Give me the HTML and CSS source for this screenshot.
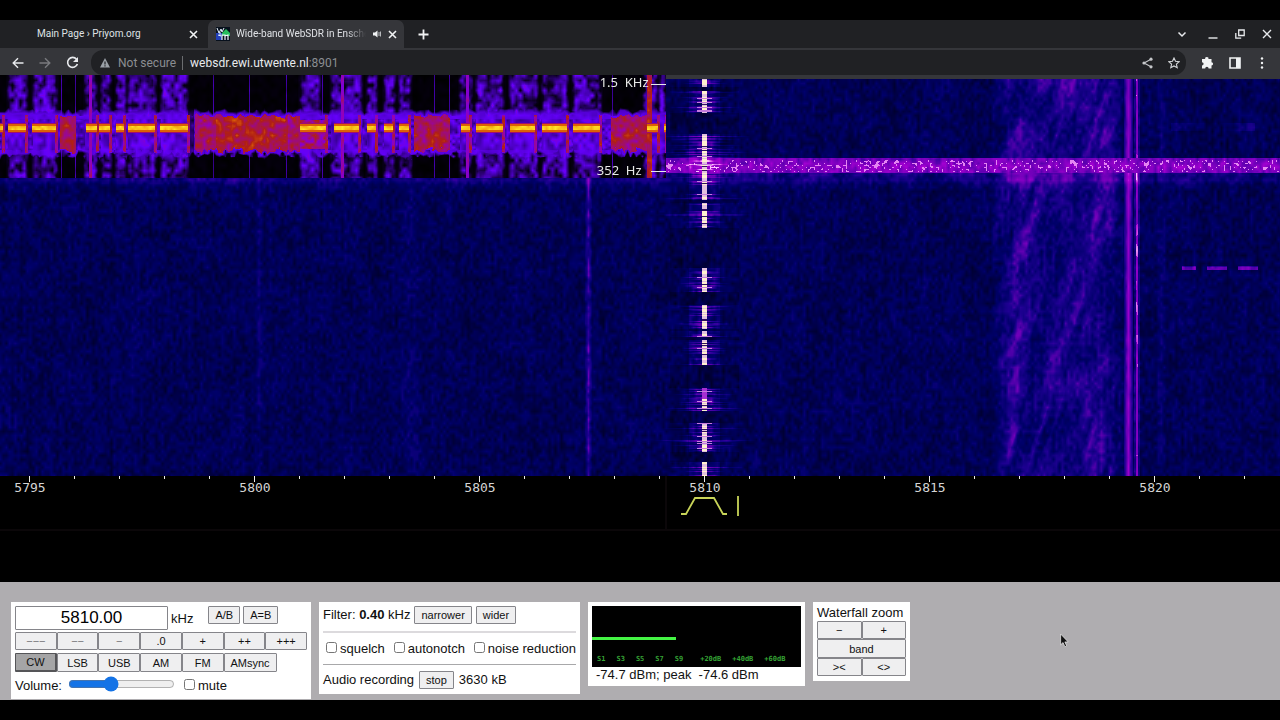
FILE: index.html
```html
<!DOCTYPE html>
<html lang="en">
<head>
<meta charset="utf-8">
<title>Wide-band WebSDR in Enschede</title>
<link rel="stylesheet" href="styles.css">
</head>
<body>
<header class="browser">
  <div class="tabs">
    <div class="tab">
      <span class="favicon"></span>
      <span class="tab-title">Main Page › Priyom.org</span>
      <button class="icon-btn" aria-label="Close tab"><svg width="9" height="9" viewBox="0 0 9 9"><path d="M1 1l7 7M8 1l-7 7" stroke="#f1f3f4" stroke-width="1.6"/></svg></button>
    </div>
    <div class="tab tab-active">
      <svg class="favicon" width="14" height="14" viewBox="0 0 14 14"><rect width="14" height="14" fill="#07101c"/><path d="M0 6h6v7H0z" fill="#2340b8"/><path d="M1 1l2 5 2-4 1 3 2-4M4 5v4M2 8l3 1" stroke="#e8f4ff" fill="none"/><path d="M6 6l4-4 4 4v3H6z" fill="#27bd5d"/><path d="M6 13V8h3v5M9 9l3-1v5" stroke="#f3f7ff" stroke-width="1.2" fill="none"/></svg>
      <span class="tab-title tab-fade">Wide-band WebSDR in Enschede</span>
      <svg width="10" height="10" viewBox="0 0 10 10"><path d="M1 3.500h2L5.500 1.500v7L3 6.500H1z" fill="#f1f3f4"/><path d="M7 3v4M8.500 2.500v5" stroke="#b8babd" fill="none"/></svg>
      <button class="icon-btn" aria-label="Close tab"><svg width="9" height="9" viewBox="0 0 9 9"><path d="M1 1l7 7M8 1l-7 7" stroke="#f1f3f4" stroke-width="1.6"/></svg></button>
    </div>
    <button class="icon-btn new-tab" aria-label="New tab"><svg width="11" height="11" viewBox="0 0 11 11"><path d="M5.500 0.500v10M.5 5.500h10" stroke="#f1f3f4" stroke-width="1.8"/></svg></button>
    <div class="window-buttons">
      <button class="icon-btn" aria-label="Search tabs"><svg width="10" height="10" viewBox="0 0 10 10"><path d="M1.500 3.500L5 7l3.500-3.500" stroke="#e8eaed" stroke-width="1.5" fill="none"/></svg></button>
      <button class="icon-btn" aria-label="Minimize"><svg width="10" height="10" viewBox="0 0 10 10"><path d="M.5 9h9" stroke="#e8eaed" stroke-width="1.4"/></svg></button>
      <button class="icon-btn" aria-label="Restore"><svg width="10" height="10" viewBox="0 0 10 10"><path d="M3.700 1h5.500v5.500H3.700zM.8 4v5.200h5.400" stroke="#e8eaed" stroke-width="1.300" fill="none"/></svg></button>
      <button class="icon-btn" aria-label="Close window"><svg width="10" height="10" viewBox="0 0 10 10"><path d="M1 1l8 8M9 1l-8 8" stroke="#e8eaed" stroke-width="1.4"/></svg></button>
    </div>
  </div>
  <div class="toolbar">
    <div class="nav-buttons">
      <button class="icon-btn" aria-label="Back"><svg width="12" height="12" viewBox="0 0 12 12"><path d="M11.500 6H1.500M6 1.200L1.200 6 6 10.800" stroke="#e8eaed" stroke-width="1.400" fill="none"/></svg></button>
      <button class="icon-btn" aria-label="Forward"><svg width="12" height="12" viewBox="0 0 12 12"><path d="M.5 6h10M6 1.200L10.800 6 6 10.800" stroke="#797a7e" stroke-width="1.400" fill="none"/></svg></button>
      <button class="icon-btn" aria-label="Reload"><svg width="13" height="13" viewBox="0 0 13 13"><path d="M10.500 3.200A5 5 0 1 0 11.400 8" stroke="#e8eaed" stroke-width="1.600" fill="none"/><path d="M12 1v5H7z" fill="#e8eaed"/></svg></button>
    </div>
    <div class="address">
      <svg width="10" height="10" viewBox="0 0 10 10"><path d="M5 0l5 9.500H0z" fill="#9aa0a6"/><path d="M5 3.500v3M5 7.300v1.200" stroke="#202124" stroke-width="1.200"/></svg>
      <span class="not-secure">Not secure</span>
      <span class="url"><span class="host">websdr.ewi.utwente.nl</span>:8901</span>
      <span class="address-actions">
        <button class="icon-btn" aria-label="Share"><svg width="11" height="12" viewBox="0 0 11 12"><path d="M9 2.200L2 6l7 3.800" stroke="#c5c7ca" stroke-width="1.100" fill="none"/><circle cx="9" cy="2.200" r="1.600" fill="#c5c7ca"/><circle cx="2" cy="6" r="1.600" fill="#c5c7ca"/><circle cx="9" cy="9.800" r="1.600" fill="#c5c7ca"/></svg></button>
        <button class="icon-btn" aria-label="Bookmark"><svg width="12" height="12" viewBox="0 0 12 12"><path d="M6 1l1.500 3.300 3.600.4-2.700 2.400.8 3.600L6 8.900l-3.200 1.800.8-3.600L.9 4.700l3.600-.4z" stroke="#d4d6d9" stroke-width="1.100" fill="none"/></svg></button>
      </span>
    </div>
    <div class="ext-buttons">
      <button class="icon-btn" aria-label="Extensions"><svg width="13" height="13" viewBox="0 0 13 13"><path d="M1 3h3.200a1.700 1.700 0 1 1 3.300 0H10.500v3.200a1.600 1.600 0 1 1 0 3.200V12.500H7.600a1.700 1.700 0 0 0-3.400 0H1V9.400a1.600 1.600 0 0 0 0-3.200z" fill="#f1f3f4"/></svg></button>
      <button class="icon-btn" aria-label="Side panel"><svg width="12" height="12" viewBox="0 0 12 12"><path d="M1 1h10v10H1z" stroke="#f1f3f4" stroke-width="1.600" fill="none"/><path d="M7 1h4v10H7z" fill="#f1f3f4"/></svg></button>
      <button class="icon-btn menu-btn" aria-label="Menu"><svg width="4" height="12" viewBox="0 0 4 12"><g fill="#f1f3f4"><circle cx="2" cy="1.500" r="1.200"/><circle cx="2" cy="6" r="1.200"/><circle cx="2" cy="10.500" r="1.200"/></g></svg></button>
    </div>
  </div>
</header>

<main class="sdr">
  <section class="waterfall">
    <canvas id="waterfall" class="waterfall-canvas" width="1280" height="397"></canvas>
    <svg class="scale" id="scale" viewBox="0 0 1280 60"></svg>
    <div class="audio-view">
      <canvas id="audio" class="audio-canvas" width="666" height="103"></canvas>
      <span class="marker marker-top">1.5&nbsp; KHz</span>
      <span class="marker marker-low">352&nbsp; Hz</span>
    </div>
  </section>

  <section class="controls">
    <form class="panel panel-tune">
      <div class="row freq-row">
        <input class="freq" id="freq" type="text" value="5810.00">
        <label class="unit" for="freq">kHz</label>
        <button type="button" class="btn">A/B</button>
        <button type="button" class="btn">A=B</button>
      </div>
      <div class="grid7">
        <button type="button" class="btn dim">−−−</button><button type="button" class="btn dim">−−</button><button type="button" class="btn dim">−</button><button type="button" class="btn">.0</button><button type="button" class="btn">+</button><button type="button" class="btn">++</button><button type="button" class="btn">+++</button>
      </div>
      <div class="grid7 modes">
        <button type="button" class="btn pressed">CW</button><button type="button" class="btn">LSB</button><button type="button" class="btn">USB</button><button type="button" class="btn">AM</button><button type="button" class="btn">FM</button><button type="button" class="btn amsync">AMsync</button>
      </div>
      <div class="row volume-row">
        <label for="vol">Volume:</label>
        <input class="slider" id="vol" type="range" min="0" max="100" value="39">
        <input class="check" id="mute" type="checkbox"><label for="mute">mute</label>
      </div>
    </form>

    <form class="panel panel-filter">
      <div class="row filter-row"><span>Filter: <b>0.40</b> kHz</span><button type="button" class="btn">narrower</button><button type="button" class="btn">wider</button></div>
      <div class="row checks">
        <span class="option"><input class="check" id="sq" type="checkbox"><label for="sq">squelch</label></span>
        <span class="option"><input class="check" id="an" type="checkbox"><label for="an">autonotch</label></span>
        <span class="option"><input class="check" id="nr" type="checkbox"><label for="nr">noise reduction</label></span>
      </div>
      <div class="row record-row"><span>Audio recording</span><button type="button" class="btn">stop</button><span>3630 kB</span></div>
    </form>

    <div class="panel panel-meter">
      <div class="meter">
        <div class="meter-bar"></div>
        <div class="meter-scale"><span>S1</span><span>S3</span><span>S5</span><span>S7</span><span>S9</span><span class="db">+20dB</span><span>+40dB</span><span>+60dB</span></div>
      </div>
      <div class="reading">-74.7 dBm; peak&nbsp; -74.6 dBm</div>
    </div>

    <form class="panel panel-zoom">
      <div>Waterfall zoom</div>
      <div class="zoom-grid">
        <button type="button" class="btn">−</button><button type="button" class="btn">+</button>
        <button type="button" class="btn band">band</button>
        <button type="button" class="btn">&gt;&lt;</button><button type="button" class="btn">&lt;&gt;</button>
      </div>
    </form>
    <svg class="cursor" width="9" height="15" viewBox="0 0 10 16"><path d="M.7.8v12l2.700-2.500 2 4.600 2-.9-2-4.400h3.700z" fill="#111" stroke="#eee" stroke-width=".8"/></svg>
  </section>
</main>
<script src="waterfall.js"></script>
</body>
</html>
```

FILE: styles.css
```css
* { box-sizing: border-box; }
body {
  margin: 0;
  padding: 20px 0;
  background: #000;
  font-family: "Liberation Sans", Arial, sans-serif;
  font-size: 13px;
  line-height: 16px;
  color: #111;
}
svg { display: block; flex: none; }
button, input { font-family: inherit; margin: 0; }
.icon-btn {
  display: flex;
  align-items: center;
  justify-content: center;
  padding: 0;
  border: 0;
  background: none;
}

/* browser frame */
.browser { font-family: Roboto, sans-serif; color: #dfe1e5; }
.tabs {
  display: flex;
  align-items: stretch;
  height: 28px;
  background: #202124;
}
.tab {
  display: flex;
  align-items: center;
  width: 208px;
  padding: 0 10px 0 16px;
  font-size: 10px;
}
.tab-active {
  width: 196px;
  gap: 6px;
  padding: 0 7px 0 8px;
  background: #35363a;
  border-radius: 7px 7px 0 0;
}
.favicon { width: 14px; margin-right: 7px; }
.tab-active .favicon { margin-right: 0; }
.tab-title { flex: 1; overflow: hidden; white-space: nowrap; }
.tab-fade {
  -webkit-mask-image: linear-gradient(90deg, #000 85%, transparent);
  mask-image: linear-gradient(90deg, #000 85%, transparent);
}
.new-tab { margin-left: 14px; }
.window-buttons {
  display: flex;
  gap: 17px;
  margin-left: auto;
  padding-right: 8px;
}
.window-buttons .icon-btn:first-child { margin-right: 4px; }
.toolbar {
  display: flex;
  align-items: flex-start;
  height: 31px;
  padding: 2px 16px 0 12px;
  background: #35363a;
}
.nav-buttons, .ext-buttons { display: flex; gap: 15px; height: 25px; }
.ext-buttons { margin-left: 15px; }
.menu-btn { margin-left: 4px; }
.address {
  display: flex;
  flex: 1;
  align-items: center;
  height: 25px;
  margin-left: 12px;
  padding: 0 6px 0 9px;
  border-radius: 12px;
  background: #202124;
  font-size: 12px;
  color: #8b8e92;
}
.not-secure { margin-left: 8px; padding-right: 6px; border-right: 1px solid #6b6d70; line-height: 14px; }
.url { margin-left: 7px; }
.host { color: #e8eaed; }
.address-actions { display: flex; gap: 15px; margin-left: auto; }

/* waterfall */
.waterfall { position: relative; min-height: 503px; background: #000; }
.waterfall-canvas { display: block; width: 100%; }
.scale { width: 100%; }
.scale-text { font: 13px "DejaVu Sans Mono", monospace; fill: #d4d4d4; text-anchor: middle; }
.audio-view { position: absolute; top: -4px; left: 0; width: 52%; }
.audio-canvas { display: block; width: 100%; }
.marker {
  position: absolute;
  right: 17px;
  font: 13px/16px "Noto Sans", sans-serif;
  color: #e8e8e8;
}
.marker-top { top: -1px; }
.marker-low { bottom: 0; right: 24px; }

/* control panels */
.controls {
  position: relative;
  display: flex;
  align-items: flex-start;
  gap: 8px;
  min-height: 118px;
  padding: 20px 11px 0;
  background: #afadb0;
}
.panel { padding: 4px; background: #fff; }
.row { display: flex; align-items: center; }
.btn {
  height: 18px;
  padding: 0 6px;
  border: 1px solid #85858a;
  border-radius: 1px;
  background: #efeff0;
  color: #111;
  font-size: 11px;
  line-height: 14px;
}
.panel-tune { width: 300px; height: 97px; }
.freq-row { align-items: flex-start; gap: 3px; }
.freq {
  width: 153px;
  height: 24px;
  padding: 0;
  border: 1px solid #85858a;
  border-radius: 1px;
  font-size: 17px;
  text-align: center;
}
.unit { margin-right: 12px; padding-top: 5px; }
.grid7 { display: grid; grid-template-columns: repeat(7, minmax(0, 1fr)); margin-top: 2px; }
.grid7 .btn { padding: 0; }
.modes { margin-top: 3px; }
.modes .btn { height: 19px; }
.dim { color: #77777a; }
.btn.pressed { border: 1px solid #555558; border-width: 1px 2px 2px 1px; background: #a5a5a6; }
.amsync { width: 53px; }
.volume-row { height: 20px; margin-top: 4px; }
.slider { width: 107px; height: 14px; margin: 0 9px 4px 6px; accent-color: #1473e6; }
.check { width: 11px; height: 11px; margin: 0 3px 3px 0; }

.panel-filter { width: 261px; height: 92px; }
.filter-row { gap: 4px; height: 18px; }
.checks {
  justify-content: space-between;
  height: 34px;
  margin-top: 7px;
  padding-left: 3px;
  border-top: 2px solid #dcdadd;
  border-bottom: 1px solid #a8a8aa;
  white-space: nowrap;
}
.option { display: flex; align-items: center; }
.record-row { gap: 5px; margin-top: 6px; }

.panel-meter { width: 217px; height: 84px; }
.meter { display: flex; flex-direction: column; height: 61px; padding-top: 31px; background: #000; }
.meter-bar { width: 40%; height: 3px; background: #45f545; }
.meter-scale {
  display: flex;
  gap: 11px;
  margin: auto 0 3px 5px;
  font: bold 7px/10px "DejaVu Sans Mono", monospace;
  color: #35a335;
}
.meter-scale .db { margin-left: 6px; }
.reading { padding-left: 4px; }

.panel-zoom { width: 97px; height: 79px; padding: 3px 4px 4px; white-space: nowrap; }
.zoom-grid { display: grid; grid-template-columns: 1fr 1fr; }
.band { grid-column: 1 / 3; height: 19px; }
.cursor { position: absolute; top: 51px; left: 1060px; }
```

FILE: waterfall.js
```js
let seed = 12345;
function rnd() {
  seed = (seed * 1664525 + 1013904223) >>> 0;
  return seed / 4294967296;
}
// Smooth value noise over a lattice with the given cell size.
function field(w, h, cx, cy) {
  const gw = Math.ceil(w / cx) + 2, gh = Math.ceil(h / cy) + 2;
  const g = Array.from({ length: gw * gh }, rnd);
  return (x, y) => {
    x = Math.max(0, Math.min(x, w)) / cx;
    y = Math.max(0, Math.min(y, h)) / cy;
    const i = Math.floor(x), j = Math.floor(y), a = x - i, b = y - j, k = j * gw + i;
    return (g[k] * (1 - a) + g[k + 1] * a) * (1 - b) + (g[k + gw] * (1 - a) + g[k + gw + 1] * a) * b;
  };
}
function shade(stops, v) {
  v = Math.max(0, Math.min(1, v));
  for (let i = 1; i < stops.length; i++) {
    const p = stops[i - 1], q = stops[i];
    if (v <= q[0]) {
      const t = (v - p[0]) / (q[0] - p[0]);
      return [1, 2, 3].map(c => p[c] + (q[c] - p[c]) * t);
    }
  }
  return stops[stops.length - 1].slice(1);
}
function paint(id, stops, level) {
  const c = document.getElementById(id), w = c.width, h = c.height, ctx = c.getContext("2d");
  const img = ctx.createImageData(w, h);
  for (let y = 0; y < h; y++) for (let x = 0; x < w; x++) {
    const p = shade(stops, level(x, y)), o = (y * w + x) * 4;
    img.data[o] = p[0]; img.data[o + 1] = p[1]; img.data[o + 2] = p[2]; img.data[o + 3] = 255;
  }
  ctx.putImageData(img, 0, 0);
  return ctx;
}
const inside = (list, v) => list.some(r => v >= r[0] && v < r[1]);
const peak = (v, c, r) => Math.max(0, 1 - Math.abs(v - c) / r);

// Radio waterfall
const fine = field(1280, 397, 3, 4), soft = field(1280, 397, 14, 22), streak = field(1280, 397, 3, 60);
const drift = field(1600, 397, 6, 28), cloud = field(1600, 397, 22, 50), thin = field(1280, 397, 2, 9), grain = field(1280, 397, 2, 2);
const keyed = [[0, 8], [12, 34], [55, 98], [98, 121], [124, 149], [189, 213], [226, 250], [252, 258], [261, 286], [309, 332], [344, 373], [383, 397]];
const side = Array.from({ length: 397 }, () => rnd());
const reach = Array.from({ length: 397 }, () => 12 + rnd() * rnd() * 50);

const wf = paint("waterfall", [[0, 0, 0, 12], [.3, 0, 0, 106], [.45, 30, 0, 146], [.6, 100, 0, 180], [.8, 170, 0, 212], [1, 255, 190, 255]], (x, y) => {
  let v = .09 + fine(x, y) * .18 + soft(x, y) * .06 + streak(x, y) * .05;
  v += peak(x, 259, 5) * .08 + peak(x, 410, 14) * .05 + peak(x, 1161, 5) * .08;
  v += peak(x, 588, 4) * (.2 + thin(x, y) * .18);
  if (x > 990 && x < 1125) {
    const edge = Math.min(1, (x - 990) / 22, (1125 - x) / 16);
    const sx = x + y * .32;
    v += edge * (.06 + .46 * Math.max(0, drift(sx, y) * .6 + cloud(sx, y) * .65 - .46) + streak(x, y) * .04);
  }
  if (x > 1123 && x < 1133) v = Math.max(v, .34 + peak(x, 1128, 4) * .32 + thin(x, y) * .12);
  if (x > 1133 && x < 1140) v += .15;
  if (x >= 1136 && x <= 1137) v = .6 + thin(x, y) * .16 + (thin(x, y + 20) > .66 ? .2 : 0);
  if (y >= 79 && y < 94) {
    v = .52 + fine(x, y) * .22 + peak(y, 87, 7) * .08;
    if (y > 80 && y < 93 && grain(x, y) > .76) v = .94;
  } else if (y >= 94 && y < 112) v += .17 * (112 - y) / 18 * (soft(x, y) + .3) + peak(y, 101, 4) * .06;
  if (y > 43 && y < 52 && x > 1170 && x < 1255) v += .12 * soft(x, y);
  if (y >= 187 && y < 191 && inside([[1182, 1196], [1207, 1227], [1238, 1258]], x)) v = (y === 187 ? .4 : .52) + fine(x, y) * .2;
  const d = Math.abs(x - 704);
  if (inside(keyed, y)) {
    if (d < 16) v += .08;
    if (side[y] > .55 && d < reach[y]) v += (1 - d / reach[y]) * .4 * side[y];
  } else if (d < 35 && !(y >= 79 && y < 94)) v -= .05;
  return v;
});
keyed.forEach(([a, b]) => {
  for (let y = a; y < b; y++) {
    wf.fillStyle = side[y] < .1 ? "#32105f" : y > 308 && y < 320 ? "#a62fd2" : side[y] > .5 ? "#fff0cf" : "#e2c0de";
    wf.fillRect(702, y, 5, 1);
    if (side[y] > .9) { wf.fillStyle = "#c47ade"; wf.fillRect(697, y, 15, 1); }
  }
});

// Audio spectrogram
const marks = [[0, 3], [8, 26], [32, 56], [86, 97], [99, 110], [116, 124], [128, 155], [160, 188], [300, 326], [334, 359], [367, 376], [384, 393], [399, 409], [461, 470], [476, 503], [510, 535], [542, 567], [573, 600], [647, 658], [664, 666]];
const blobs = [[60, 76], [195, 300], [414, 450], [611, 648]];
const columns = [[8, 26], [33, 56], [85, 96], [101, 110], [116, 125], [128, 155], [161, 187], [300, 319], [331, 361], [367, 376], [384, 394], [399, 410], [460, 471], [476, 503], [510, 537], [542, 567], [573, 600], [644, 656], [659, 664]];
const lines = [61, 75, 213, 249, 286, 322, 434, 449, 612];
const near = (list, x) => Math.max(...list.map(([a, b]) => Math.min(1, Math.max(0, Math.min(x - a + 3, b + 3 - x) / 5))));
const a1 = field(666, 103, 4, 5), a2 = field(666, 103, 3, 3);
const av = paint("audio", [[0, 0, 0, 0], [.12, 8, 0, 25], [.3, 55, 0, 145], [.5, 100, 0, 250], [.62, 145, 0, 190], [.75, 176, 30, 20], [.87, 235, 120, 0], [1, 255, 235, 40]], (x, y) => {
  const n = a1(x, y), m = a2(x, y), c = near(columns, x);
  let v = n * .07 + c * (.03 + n * .38 + m * .12);
  if (lines.some(l => Math.abs(x - l) < 1)) v = .27 + n * .12;
  const top = 34 + n * 7, end = 82 - m * 8;
  const fade = Math.max(0, Math.min(1, (y - top + 3) / 4, (end - y + 3) / 4));
  if (fade > 0) {
    let b = c > .5 ? .3 + n * .26 : .24 + m * .32;
    if (y < 44 || y > 74) b = .4 + n * .12;
    if (x > 187 && x < 194) b = .14 + n * .2;
    if (inside(blobs, x) && y > top + 3 && y < end - 3) {
      b = .59 + n * .13 + m * .09;
      if (x > 215 && x < 288) b += .04;
    }
    if (x >= 300 && x < 326 && y < 74 && y > 44) b = .56 + m * .2;
    if (marks.some(r => Math.abs(x - r[1]) < 2) && y > 39 && y < 78) b = .6 + m * .18;
    v = Math.max(v, v + (b - v) * fade);
  }
  if ([90, 342, 467, 649].some(l => Math.abs(x - l) < (l > 600 ? 3 : 1.5))) v = (x > 600 ? .66 : .56) + n * .14;
  if (y >= 48 && y < 58 && inside(marks, x)) v = y > 50 && y < 55 ? .92 + m * .08 : y < 49 || y > 56 ? .68 : .84;
  return v;
});
av.fillStyle = "#e8e8e8";
av.fillRect(651, 9, 15, 1);
av.fillRect(651, 96, 15, 1);

// Frequency scale
let marksSvg = "";
for (let f = 5795; f <= 5822; f++) {
  const x = 704 + (f - 5810) * 45, major = f % 5 === 0;
  marksSvg += `<rect x="${x}" y="0" width="1" height="${major ? 6 : 3}" fill="#eee"/>`;
  if (major) marksSvg += `<text class="scale-text" x="${x + 1}" y="16">${f}</text>`;
}
marksSvg += '<path d="M681 38h5l9-16h19l9 16h4M738 20v20" fill="none" stroke="#c8d458" stroke-width="1.800"/>';
marksSvg += '<path d="M0 54h1280M666 0v54" fill="none" stroke="#0b0709" stroke-width="2"/>';
document.getElementById("scale").innerHTML = marksSvg;
```
